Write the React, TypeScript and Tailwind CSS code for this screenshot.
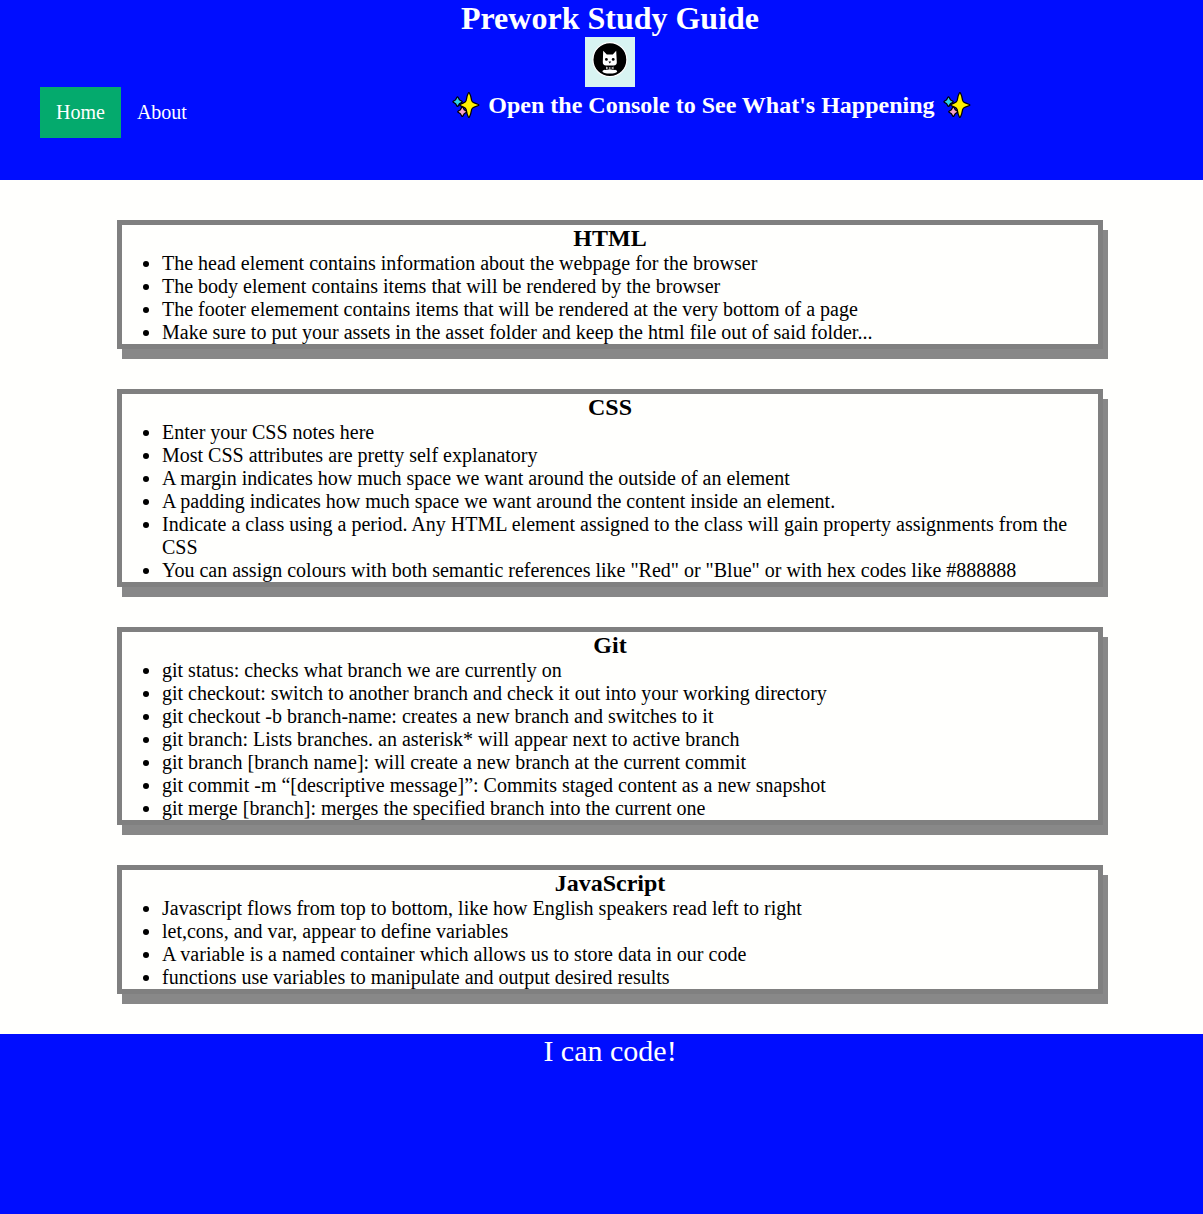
const sections = [
  {
    title: "HTML",
    notes: [
      "The head element contains information about the webpage for the browser",
      "The body element contains items that will be rendered by the browser",
      "The footer elemement contains items that will be rendered at the very bottom of a page",
      "Make sure to put your assets in the asset folder and keep the html file out of said folder...",
    ],
  },
  {
    title: "CSS",
    notes: [
      "Enter your CSS notes here",
      "Most CSS attributes are pretty self explanatory",
      "A margin indicates how much space we want around the outside of an element",
      "A padding indicates how much space we want around the content inside an element.",
      "Indicate a class using a period. Any HTML element assigned to the class will gain property assignments from the CSS",
      'You can assign colours with both semantic references like "Red" or "Blue" or with hex codes like #888888',
    ],
  },
  {
    title: "Git",
    notes: [
      "git status: checks what branch we are currently on",
      "git checkout: switch to another branch and check it out into your working directory",
      "git checkout -b branch-name: creates a new branch and switches to it",
      "git branch: Lists branches. an asterisk* will appear next to active branch",
      "git branch [branch name]: will create a new branch at the current commit",
      "git commit -m “[descriptive message]”: Commits staged content as a new snapshot",
      "git merge [branch]: merges the specified branch into the current one",
    ],
  },
  {
    title: "JavaScript",
    notes: [
      "Javascript flows from top to bottom, like how English speakers read left to right",
      "let,cons, and var, appear to define variables",
      "A variable is a named container which allows us to store data in our code",
      "functions use variables to manipulate and output desired results",
    ],
  },
];

function Sparkles() {
  return (
    <svg viewBox="0 0 28 28" className="h-7 w-7 shrink-0" stroke="#000" strokeWidth="2.4" strokeLinejoin="round" paintOrder="stroke">
      <path d="M5.5 6.6 L7 9.2 L9.6 10.7 L7 12.2 L5.5 14.8 L4 12.2 L1.6 10.7 L4 9.2Z" fill="#2fd0ee" />
      <path d="M10.3 16.6 L11.8 19.2 L14.2 20.7 L11.8 22.2 L10.3 24.8 L8.8 22.2 L6.4 20.7 L8.8 19.2Z" fill="#f5a3c7" />
      <path d="M16.9 2.3 Q18.2 4.5 19 9.4 Q19.5 11.6 22 12.4 L26.2 14 L22 15.6 Q19.5 16.4 19 18.6 Q18.2 23.5 16.9 25.7 Q15.6 23.5 14.8 18.6 Q14.3 16.4 11.8 15.6 L8.4 14 L11.8 12.4 Q14.3 11.6 14.8 9.4 Q15.6 4.5 16.9 2.3Z" fill="#fff100" />
    </svg>
  );
}

function CatLogo() {
  return (
    <svg viewBox="0 0 50 50" className="block h-[50px] w-[50px] bg-[#d8f4f2]">
      <circle cx="24.9" cy="22.7" r="17" fill="#000" stroke="#fff" strokeWidth="1.2" />
      <ellipse cx="24.8" cy="34.3" rx="7.4" ry="2.3" fill="#fff" />
      <path d="M18.2 13.8 L21.8 17.4 H27.8 L31.2 13.8 L31.8 25 Q32 28.4 28.6 28.6 H21 Q17.7 28.4 17.8 25Z" fill="#fff" />
      <circle cx="21.4" cy="22.4" r="1.4" />
      <circle cx="28.2" cy="22.4" r="1.4" />
      <path d="M23.4 24.6 H26.2 L24.8 26.4Z" />
      <path d="M19.8 29.2 H29.8 V33 L24.8 32.3 L19.8 33Z" />
      <path d="M21 29.6 L23.6 31 L21 32.4Z M28.6 29.6 L26 31 L28.6 32.4Z" fill="#bbb" />
      <circle cx="24.8" cy="31" r="0.8" fill="#fff" />
    </svg>
  );
}

export default function App() {
  return (
    <div className="w-full overflow-hidden">
      <div className="w-[1220px] bg-[#fffffd] font-['Liberation_Serif',serif] text-[20px] leading-[23px] text-black">
        <header className="h-[180px] bg-[#000dff] text-white">
          <h1 className="text-center text-[32px] font-bold leading-[37px]">Prework Study Guide</h1>
          <div className="flex justify-center">
            <CatLogo />
          </div>
          <div className="flex items-start pl-10">
            <nav className="flex">
              <a className="bg-[#04aa6d] px-4 py-[14px]">Home</a>
              <a className="px-4 py-[14px]">About</a>
            </nav>
            <h2 className="flex flex-1 items-center justify-center gap-2 pt-1 text-[24px] font-bold leading-7">
              <Sparkles />
              <span>Open the Console to See What's Happening</span>
              <Sparkles />
            </h2>
          </div>
        </header>
        <main className="flex flex-col items-center gap-10 pb-10 pt-10">
          {sections.map((section) => (
            <section
              key={section.title}
              className="w-[986px] border-[5px] border-[#808080] shadow-[5px_10px_#888888]"
            >
              <h2 className="text-center text-[24px] font-bold leading-[27px]">{section.title}</h2>
              <ul className="list-disc pl-10">
                {section.notes.map((note) => (
                  <li key={note}>{note}</li>
                ))}
              </ul>
            </section>
          ))}
        </main>
        <footer className="h-[180px] bg-[#000dff] text-center text-[30px] leading-[34px] text-white">
          I can code!
        </footer>
      </div>
    </div>
  );
}
